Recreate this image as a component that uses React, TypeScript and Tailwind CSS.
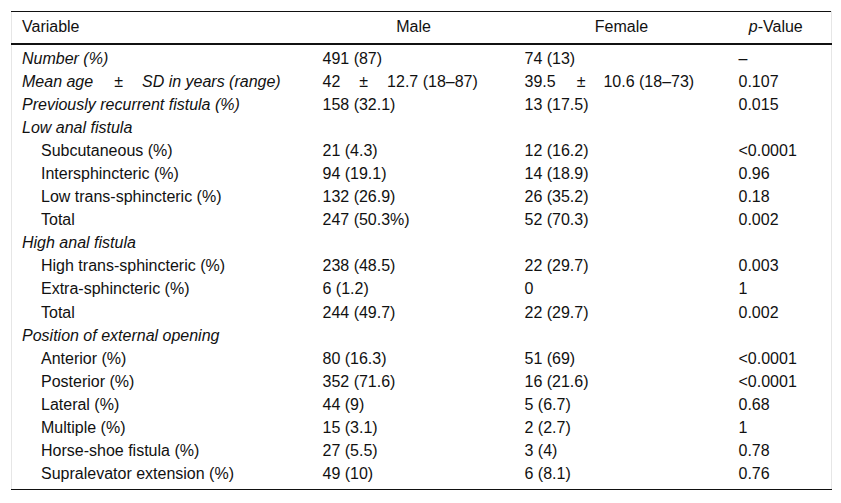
import React from "react"

type Row = {
  label: React.ReactNode
  male?: React.ReactNode
  female?: React.ReactNode
  p?: string
  italic?: boolean
  indent?: boolean
}

const rows: Row[] = [
  { label: "Number (%)", male: "491 (87)", female: "74 (13)", p: "–", italic: true },
  {
    label: (
      <>
        Mean age<span className="ml-[21px] mr-[19px]">±</span>SD in years (range)
      </>
    ),
    male: (
      <>
        42<span className="ml-[19px] mr-[19px]">±</span>12.7 (18–87)
      </>
    ),
    female: (
      <>
        39.5<span className="ml-[21px] mr-[18px]">±</span>10.6 (18–73)
      </>
    ),
    p: "0.107",
    italic: true,
  },
  { label: "Previously recurrent fistula (%)", male: "158 (32.1)", female: "13 (17.5)", p: "0.015", italic: true },
  { label: "Low anal fistula", italic: true },
  { label: "Subcutaneous (%)", male: "21 (4.3)", female: "12 (16.2)", p: "<0.0001", indent: true },
  { label: "Intersphincteric (%)", male: "94 (19.1)", female: "14 (18.9)", p: "0.96", indent: true },
  { label: "Low trans-sphincteric (%)", male: "132 (26.9)", female: "26 (35.2)", p: "0.18", indent: true },
  { label: "Total", male: "247 (50.3%)", female: "52 (70.3)", p: "0.002", indent: true },
  { label: "High anal fistula", italic: true },
  { label: "High trans-sphincteric (%)", male: "238 (48.5)", female: "22 (29.7)", p: "0.003", indent: true },
  { label: "Extra-sphincteric (%)", male: "6 (1.2)", female: "0", p: "1", indent: true },
  { label: "Total", male: "244 (49.7)", female: "22 (29.7)", p: "0.002", indent: true },
  { label: "Position of external opening", italic: true },
  { label: "Anterior (%)", male: "80 (16.3)", female: "51 (69)", p: "<0.0001", indent: true },
  { label: "Posterior (%)", male: "352 (71.6)", female: "16 (21.6)", p: "<0.0001", indent: true },
  { label: "Lateral (%)", male: "44 (9)", female: "5 (6.7)", p: "0.68", indent: true },
  { label: "Multiple (%)", male: "15 (3.1)", female: "2 (2.7)", p: "1", indent: true },
  { label: "Horse-shoe fistula (%)", male: "27 (5.5)", female: "3 (4)", p: "0.78", indent: true },
  { label: "Supralevator extension (%)", male: "49 (10)", female: "6 (8.1)", p: "0.76", indent: true },
]

export default function App() {
  return (
    <div className="bg-white p-[11px] font-['Liberation_Sans',Arial,sans-serif] text-[16px] text-[#111]">
      <table className="w-[820px] table-fixed border-collapse border-x border-x-[#e6e6e6] border-t border-t-[#111] border-b border-b-[#111]">
        <colgroup>
          <col className="w-[301px]" />
          <col className="w-[202px]" />
          <col className="w-[214px]" />
          <col className="w-[103px]" />
        </colgroup>
        <thead>
          <tr className="border-b-2 border-b-[#111]">
            <th className="h-[32px] pl-[10px] text-left font-normal">Variable</th>
            <th className="text-center font-normal">Male</th>
            <th className="text-center font-normal">Female</th>
            <th className="pr-[8px] text-center font-normal">
              <i>p</i>-Value
            </th>
          </tr>
        </thead>
        <tbody>
          {rows.map((r, i) => (
            <tr key={i} className="leading-[23.1px]">
              <td className={`${r.indent ? "pl-[29px]" : "pl-[10px]"} ${r.italic ? "italic" : ""} ${i === 0 ? "pt-[2px]" : ""} whitespace-nowrap`}>
                {r.label}
              </td>
              <td className={`pl-[10px] whitespace-nowrap ${i === 0 ? "pt-[2px]" : ""}`}>{r.male}</td>
              <td className={`pl-[10px] whitespace-nowrap ${i === 0 ? "pt-[2px]" : ""}`}>{r.female}</td>
              <td className={`pl-[10px] whitespace-nowrap ${i === 0 ? "pt-[2px]" : ""}`}>{r.p}</td>
            </tr>
          ))}
          <tr>
            <td colSpan={4} className="h-[4px]" />
          </tr>
        </tbody>
      </table>
    </div>
  )
}
